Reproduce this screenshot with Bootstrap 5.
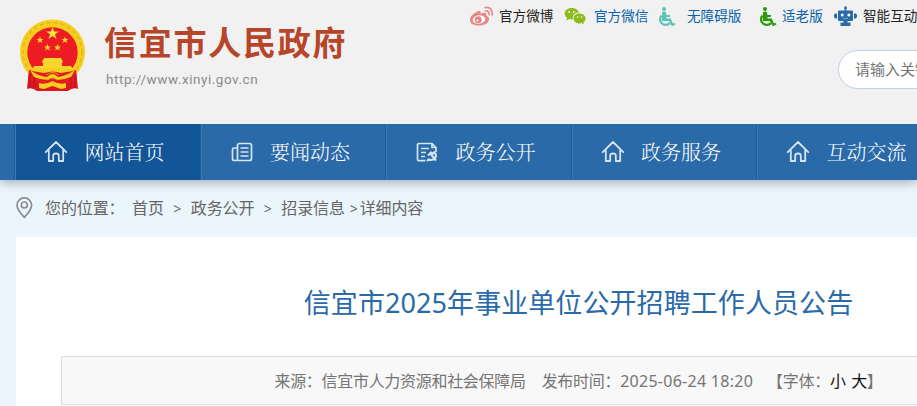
<!DOCTYPE html>
<html lang="zh-CN">
<head>
    <meta charset="UTF-8">
    <meta name="viewport" content="width=device-width, initial-scale=1.0">
    <title>信宜市2025年事业单位公开招聘工作人员公告</title>
    <!-- Bootstrap CSS -->
    <link href="https://cdn.jsdelivr.net/npm/bootstrap@5.3.0/dist/css/bootstrap.min.css" rel="stylesheet">
    <style>
        body {
            background-color: #eaf5fc;
            font-family: "Noto Sans", "Noto Sans CJK SC", sans-serif;
            font-size: 16px;
            height: 406px;
            overflow: hidden;
        }
        a { text-decoration: none; color: inherit; }
        svg { display: block; flex-shrink: 0; }
        .page-wrap { width: 1125px; margin-left: 16px; }

        .site-header {
            background-color: #f1f1f1;
            height: 124px;
            position: relative;
            z-index: 2;
        }
        .brand-link { padding: 17px 0 0 2px; }
        .brand-text { margin-left: 17px; padding-top: 4px; }
        .brand-name {
            font: bold 33px/40px "Noto Sans CJK SC", sans-serif;
            letter-spacing: 1.75px;
            color: #b7452a;
        }
        .brand-url {
            font: 13.500px/18px Roboto, sans-serif;
            letter-spacing: .54px;
            color: #8b8b8b;
            margin: 9px 0 0 2px;
        }
        .header-right { width: 672px; }
        .top-links {
            font-size: 13.6px;
            line-height: 32px;
            color: #222;
            height: 32px;
        }
        .top-links a { display: flex; align-items: center; flex: none; }
        .top-links .blue { color: #0a62ad; }
        .top-links a:nth-child(1) { width: 95px; }
        .top-links a:nth-child(2) { width: 93px; }
        .top-links a:nth-child(3) { width: 101px; }
        .top-links a:nth-child(4) { width: 76px; }
        .weibo { margin-right: 5px; }
        .barrier-free { color: #5bc4b4; margin: 1px 11px 0 0; }
        .elder { color: #299c08; margin: 1px 5px 0 0; }
        .robot { margin-right: 6px; }
        .search-box {
            width: 270px;
            height: 39px;
            margin: 18px 0 0 369px;
            padding-left: 16px;
            border: 1px solid #bccfe6;
            border-radius: 20px;
            background-color: #fff;
            color: #757575;
            font-size: 15px;
            line-height: 36px;
        }

        .main-nav {
            height: 56px;
            background-color: #2a6aa8;
            box-shadow: 0 2px 10px rgba(70, 75, 90, .45);
            position: relative;
        }
        .main-nav .page-wrap { margin-left: 15.4px; }
        .main-nav .nav-item {
            width: 185.5px;
            height: 56px;
            padding-left: 28px;
            border-left: 1px solid #3b78b4;
            box-shadow: -1px 0 #205e9b;
            color: #fff;
            font-family: "Noto Serif CJK SC", "Noto Sans CJK SC", serif;
            font-weight: 300;
            font-size: 20px;
        }
        .main-nav .nav-item.current { background-color: #135697; }
        .main-nav span { margin-left: 16px; }
        .main-nav svg { opacity: .82; }

        .crumbs { height: 56px; color: #666; letter-spacing: -.12px; }
        .crumb-label { width: 87px; margin-left: 12px; }
        .gt { width: 27px; text-align: center; font-size: 14px; }
        .gt-last { margin: 0 2px 0 5px; font-size: 14px; }

        .article { height: 169px; margin-top: 1px; padding: 0 45px; background-color: #fff; }
        .article-title {
            font-size: 27px;
            line-height: 40px;
            letter-spacing: .08px;
            color: #2a6aa8;
            padding-top: 46px;
            margin-bottom: 33px;
        }
        .article-info {
            height: 49px;
            border: 1px solid #ddd;
            background-color: #f8f8f8;
            color: #757575;
            letter-spacing: -.3px;
        }
        .article-info .date { letter-spacing: .27px; }
        .font-switch { margin-left: 14px; word-spacing: 1.7px; }
        .font-switch a { color: #111; }
    </style>
</head>
<body>
    <!-- Shared icons -->
    <svg width="0" height="0" class="d-none">
        <symbol id="home" viewBox="0 0 24 24">
            <path d="M1.700 12.200 12 2l10.300 10.200M4.800 10.200V21h4.400v-5.500q0-2 2.800-2t2.800 2V21h4.400V10.200" fill="none" stroke="#fff" stroke-width="1.800" stroke-linejoin="round" stroke-linecap="round"/>
        </symbol>
        <symbol id="wheelchair" viewBox="0 0 19 20">
            <circle cx="7" cy="2.100" r="2"/>
            <path d="M5 5.300q2-1.600 4 0l.3 2.700H13v1.900H9.400l.2 1.700h4.200l2.100 4.800 1.700-.7.900 1.800-3.600 1.700-2.900-5.100H5z"/>
            <path d="M4.500 8.500A5.100 5.100 0 1 0 13 16" fill="none" stroke="currentColor" stroke-width="2.300"/>
        </symbol>
    </svg>

    <header class="site-header">
        <div class="page-wrap d-flex">
            <a href="#" class="brand-link d-flex">
                <svg width="69" height="75" viewBox="0 0 69 75">
                    <path d="M11 52 9 72q5-2 10 2h31q5-4 10-2l-2-20z" fill="#dc1720"/>
                    <circle cx="34.500" cy="35" r="32.500" fill="#f6ce20"/>
                    <circle cx="34.500" cy="35" r="29.500" fill="none" stroke="#e3b31b" stroke-width="1.500" stroke-dasharray="4 3"/>
                    <circle cx="34.500" cy="35.500" r="25.200" fill="#ed1b24"/>
                    <path d="m34.500 10 1.600 4.500h4.800L37 17.300l1.500 4.700-4-2.900-4 2.900 1.500-4.700-3.900-2.800h4.800z" fill="#ffe33a"/>
                    <g fill="#f9d52d">
                        <path d="m22 19.500 1 2.400h2.500l-2 1.600.8 2.500-2.300-1.500-2.300 1.500.8-2.500-2-1.600H21zM47 19.500l1 2.400h2.500l-2 1.600.8 2.500-2.300-1.500-2.300 1.500.8-2.500-2-1.600H46zM29.500 27l1 2.400H33l-2 1.600.8 2.500-2.300-1.500-2.300 1.500L28 31l-2-1.600h2.500zM39.500 27l1 2.400H43L41 31l.8 2.500-2.300-1.500-2.300 1.500L38 31l-2-1.600h2.500z"/>
                        <path d="M26 41h17l2 4-1 1v3h9l2 4H14l2-4h9v-3l-1-1z"/>
                    </g>
                    <path d="M11 53q24 3 47 0l1 11q-24 6-49 0z" fill="#e31b23"/>
                    <path d="M12 51h45l-2 3-12 2q-8-3-17 0l-12-2z" fill="#f6ce20"/>
                    <path d="M12 53q8 6 17 7 3-3 5.500-3t5.500 3q8-1 17-7l-4 7q-7 3-14 3l-4.500-2-4.500 2q-7 0-14-3z" fill="#f6ce20"/>
                    <path d="M21 66q7 2 13.500-2Q41 68 48 66v5l-5 1-8.500-3-8.500 3-5-1z" fill="#f6ce20"/>
                    <path d="M28 58q6.500-5 13 0M29 63q5.500-4 11 0" fill="none" stroke="#daa514"/>
                    <path d="M12 57v14M16 60v11M53 60v11M57 57v14" stroke="#b91219"/>
                </svg>
                <div class="brand-text">
                    <div class="brand-name text-nowrap">信宜市人民政府</div>
                    <div class="brand-url">http://www.xinyi.gov.cn</div>
                </div>
            </a>
            <div class="header-right ms-auto flex-shrink-0">
                <div class="top-links d-flex text-nowrap">
                    <a href="#">
                        <svg width="25" height="21" viewBox="0 0 25 21" class="weibo">
                            <path d="M9 5.300q2.500-1 2.700.8l-.3 1.600q4-1.700 5.600-.5 1 .8.300 2.600 3.200 1 2.700 4-1 5.300-9.500 5.800Q1.500 19.400 1 14.200.8 9 9 5.300z" fill="#e88586"/>
                            <ellipse cx="10" cy="13.500" rx="6.300" ry="4.200" fill="#fff" transform="rotate(-8 10 13.500)"/>
                            <circle cx="9.200" cy="13.800" r="3.500" fill="#e88586"/><circle cx="8.300" cy="14.500" r="1.100" fill="#fff"/>
                            <path d="M16 1.600q7.500-1.200 7.300 7.500M16.300 5q4-.6 3.900 3.700" fill="none" stroke="#ea8788" stroke-width="1.700" stroke-linecap="round"/>
                        </svg>官方微博
                    </a>
                    <a href="#" class="blue">
                        <svg width="22" height="18" viewBox="0 0 22 18" class="me-2">
                            <path d="M7.500 1C3.500 1 .6 3.600.6 6.600q0 2.700 2.400 4.400l-.6 2.500 2.900-1.400q1.700.5 3.500.2c-.5-4 2.600-6.700 6.200-6.700C14.200 3 11.300 1 7.500 1z" fill="#8ebb1d"/>
                            <path d="M15.500 6.500c-3.500 0-6 2.200-6 5s2.500 5 6 5q1.100 0 2.200-.4l2.300 1.400-.6-2.200q2.200-1.500 2.200-3.800c0-2.800-2.800-5-6.100-5z" fill="#8ebb1d"/>
                            <circle cx="5.200" cy="5" r=".9" fill="#fff"/><circle cx="9.800" cy="5" r=".9" fill="#fff"/>
                            <circle cx="13.600" cy="10" r=".8" fill="#fff"/><circle cx="17.500" cy="10" r=".8" fill="#fff"/>
                        </svg>官方微信
                    </a>
                    <a href="#" class="blue">
                        <svg width="19" height="20" class="barrier-free" fill="currentColor"><use href="#wheelchair"/></svg>无障碍版
                    </a>
                    <a href="#" class="blue">
                        <svg width="19" height="20" class="elder" fill="currentColor"><use href="#wheelchair"/></svg>适老版
                    </a>
                    <a href="#">
                        <svg width="23" height="20" viewBox="0 0 23 20" class="robot">
                            <path d="M10.700 2h1.600v3h-1.600zM5 4.500h13q1 0 1 1v8.500q0 1-1 1H5q-1 0-1-1V5.500q0-1 1-1zM1 7.500h2v5H1l-1-1.500V9zM20 7.500h2L23 9v2l-1 1.500h-2zM9.500 15h4v1.500h3V20h-10v-3.500h3z" fill="#2a6aa8"/>
                            <circle cx="11.500" cy="1.700" r="1.500" fill="#2a6aa8"/>
                            <circle cx="8.200" cy="9" r="1.500" fill="#fff"/><circle cx="14.800" cy="9" r="1.500" fill="#fff"/>
                            <path d="M9 12.600h5" stroke="#7aa5cd"/>
                        </svg>智能互动
                    </a>
                </div>
                <div class="search-box text-nowrap">请输入关键字</div>
            </div>
        </div>
    </header>

    <nav class="main-nav">
        <div class="page-wrap d-flex text-nowrap">
            <a href="#" class="nav-item current d-flex align-items-center">
                <svg width="24" height="24"><use href="#home"/></svg><span>网站首页</span>
            </a>
            <a href="#" class="nav-item d-flex align-items-center">
                <svg width="24" height="24" viewBox="0 0 24 24" fill="none" stroke="#fff" stroke-width="1.700">
                    <path d="M7.500 20.500V5.500q0-2 2-2h10q2 0 2 2v13q0 2-2 2h-15q-2 0-2-2V9.500q0-1.500 1.500-1.500h3.500M10.500 8h8M10.500 12h8M10.500 16h8"/>
                </svg><span>要闻动态</span>
            </a>
            <a href="#" class="nav-item d-flex align-items-center">
                <svg width="24" height="24" viewBox="0 0 24 24" fill="none" stroke="#fff" stroke-width="1.700">
                    <path d="M10.500 20.700H4q-1.500 0-1.500-1.500v-14Q2.500 3.500 4 3.500h13l4 4V12M17 3.500v4h4M6 8.500h8M6 12.500h5M6 16.500h4"/>
                    <path d="m13 15.500 3-3 2 1-1.500 1.500 4.500 5.500M18.500 11.500q4 3 1.500 6.500-2.500 3-6.500 1.500L12 21" stroke-width="2"/>
                </svg><span>政务公开</span>
            </a>
            <a href="#" class="nav-item d-flex align-items-center">
                <svg width="24" height="24"><use href="#home"/></svg><span>政务服务</span>
            </a>
            <a href="#" class="nav-item d-flex align-items-center">
                <svg width="24" height="24"><use href="#home"/></svg><span>互动交流</span>
            </a>
        </div>
    </nav>

    <main class="page-wrap">
        <div class="crumbs d-flex align-items-center text-nowrap">
            <svg width="17" height="22" viewBox="0 0 17 22" fill="none" stroke="#8b8f93" stroke-width="1.700">
                <path d="M8.300 20.300Q1 12.500 1 8.200a7.300 7.300 0 0 1 14.600 0q0 4.300-7.300 12.100z"/><circle cx="8.300" cy="8" r="3"/>
            </svg>
            <span class="crumb-label">您的位置：</span>
            <a href="#">首页</a><span class="gt">&gt;</span>
            <a href="#">政务公开</a><span class="gt">&gt;</span>
            <a href="#">招录信息</a><span class="gt-last">&gt;</span><span>详细内容</span>
        </div>
        <article class="article">
            <h1 class="article-title text-center fw-normal text-nowrap">信宜市2025年事业单位公开招聘工作人员公告</h1>
            <div class="article-info d-flex align-items-center justify-content-center text-nowrap">
                <span>来源：信宜市人力资源和社会保障局</span>
                <span class="ms-3">发布时间：<span class="date">2025-06-24 18:20</span></span>
                <span class="font-switch">【字体：<a href="#">小</a> <a href="#">大</a>】</span>
            </div>
        </article>
    </main>

    <!-- Bootstrap JS -->
    <script src="https://cdn.jsdelivr.net/npm/bootstrap@5.3.0/dist/js/bootstrap.bundle.min.js"></script>
</body>
</html>
